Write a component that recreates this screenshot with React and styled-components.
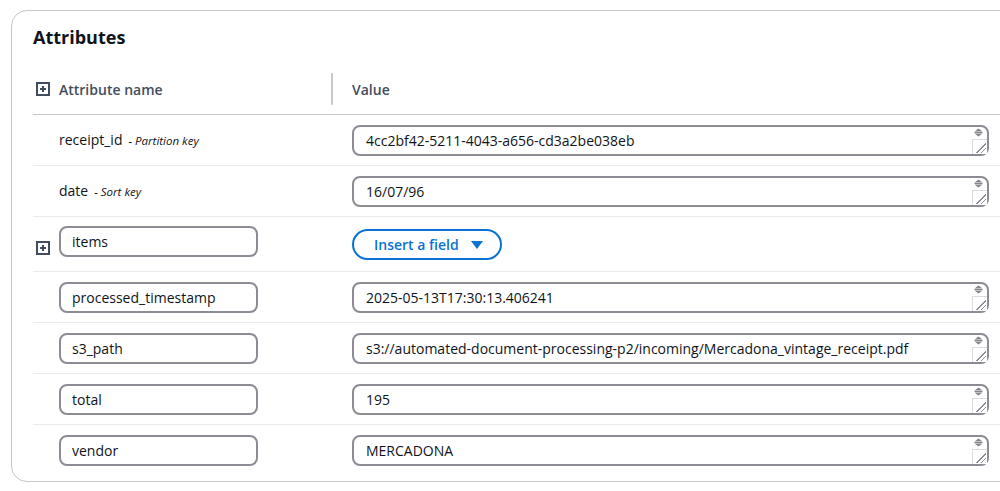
import React from "react";
import styled, { createGlobalStyle } from "styled-components";

const Global = createGlobalStyle`
  html, body { margin: 0; padding: 0; background: #ffffff; overflow: hidden; }
  body { font-family: "Open Sans", "Noto Sans", Arial, sans-serif; color: #0f141a; }
  * { box-sizing: border-box; }
`;

const Page = styled.div`
  padding: 10px 0 0 11px;
  width: 1000px;
  height: 491px;
  overflow: hidden;
`;

const Card = styled.section`
  width: 1040px;
  height: 472px;
  border: 1px solid #c6c6cd;
  border-radius: 16px;
  padding: 15px 0 0 21px;
  background: #fff;
`;

const Title = styled.h2`
  margin: 0 0 16px 0;
  font-size: 18px;
  line-height: 22px;
  font-weight: 700;
  color: #0f141a;
`;

const HeaderRow = styled.div`
  display: flex;
  align-items: center;
  height: 51px;
  border-bottom: 1px solid #c6c6cd;
`;

const IconCell = styled.div`
  width: 26px;
  flex: none;
  display: flex;
  padding-left: 3px;
  padding-top: ${(p) => p.$top || 0}px;
  align-self: ${(p) => (p.$top ? "flex-start" : "center")};
`;

const HeadName = styled.div`
  width: 272px;
  font-size: 14px;
  font-weight: 600;
  color: #414d5c;
`;

const HeadDivider = styled.div`
  width: 2px;
  height: 32px;
  background: #c6c6cd;
  border-radius: 1px;
`;

const HeadValue = styled.div`
  padding-left: 19px;
  font-size: 14px;
  font-weight: 600;
  color: #414d5c;
`;

const Row = styled.div`
  display: grid;
  grid-template-columns: 26px 293px 1fr;
  align-items: ${(p) => (p.$top ? "start" : "center")};
  min-height: ${(p) => (p.$tall ? 55 : 51)}px;
  padding-top: ${(p) => (p.$top ? 9 : 0)}px;
  border-bottom: ${(p) => (p.$last ? "none" : "1px solid #e9ebed")};
`;

const NameText = styled.div`
  font-size: 14px;
  line-height: 20px;
  color: #0f141a;
`;

const KeyHint = styled.span`
  font-size: 11.5px;
  font-style: italic;
  margin-left: 6px;
  color: #0f141a;
`;

const NameInput = styled.input`
  width: 199px;
  height: 31px;
  border: 2px solid #8c8c94;
  border-radius: 8px;
  padding: 0 11px;
  font-family: inherit;
  font-size: 14px;
  color: #0f141a;
  background: #fff;
  outline: none;
`;

const AreaWrap = styled.div`
  position: relative;
  width: 637px;
`;

const ValueArea = styled.textarea`
  display: block;
  width: 637px;
  height: 31px;
  border: 2px solid #8c8c94;
  border-radius: 8px;
  padding: 4px 12px;
  font-family: inherit;
  font-size: 14px;
  line-height: 19px;
  color: #0f141a;
  background: #fff;
  overflow-y: scroll;
  resize: vertical;
  outline: none;
  white-space: nowrap;

  &::-webkit-scrollbar {
    width: 15px;
    background: #fff;
  }
  &::-webkit-scrollbar-thumb,
  &::-webkit-scrollbar-track {
    background: transparent;
  }
  &::-webkit-scrollbar-button {
    display: none;
  }
  &::-webkit-resizer {
    background:
      linear-gradient(#dcdce0, #dcdce0) no-repeat left top / 1px 100%,
      linear-gradient(#dcdce0, #dcdce0) no-repeat left top / 100% 1px,
      linear-gradient(
          to bottom right,
          transparent 58%,
          #8c8c94 58%,
          #8c8c94 64%,
          transparent 64%,
          transparent 76%,
          #8c8c94 76%,
          #8c8c94 82%,
          transparent 82%
        )
        no-repeat right 1px bottom 1px / 12px 12px,
      #fff;
  }
  &::-webkit-scrollbar-corner {
    background: #fff;
  }
`;

const ScrollArrows = styled.svg`
  position: absolute;
  top: 2px;
  right: 2px;
  width: 15px;
  height: 11px;
  pointer-events: none;
`;

const InsertButton = styled.button`
  display: inline-flex;
  align-items: center;
  gap: 11px;
  height: 31px;
  margin-top: 3px;
  padding: 0 16px 0 20px;
  border: 2px solid #0972d3;
  border-radius: 20px;
  background: #fff;
  color: #0972d3;
  font-family: inherit;
  font-size: 14px;
  font-weight: 600;
  cursor: pointer;
`;

const PlusSquare = () => (
  <svg width="14" height="14" viewBox="0 0 14 14" aria-hidden="true">
    <rect x="1" y="1" width="12" height="12" fill="none" stroke="#414d5c" strokeWidth="2" />
    <path d="M7 4v6M4 7h6" stroke="#414d5c" strokeWidth="2" />
  </svg>
);

const Caret = () => (
  <svg width="14" height="10" viewBox="0 0 14 10" aria-hidden="true">
    <path d="M1 1h12L7 9z" fill="#0972d3" />
  </svg>
);

const Value = ({ value }) => (
  <AreaWrap>
    <ValueArea rows={1} defaultValue={value} />
    <ScrollArrows viewBox="0 0 15 11" aria-hidden="true">
      <path d="M2.5 4.5L6.5 1.5L10.5 4.5Z" fill="#85858d" />
      <path d="M2.5 5.5H10.5" stroke="#85858d" strokeWidth="1" />
      <path d="M2.5 6.5H10.5L6.5 9.5Z" fill="#85858d" />
    </ScrollArrows>
  </AreaWrap>
);

const rows = [
  { name: "processed_timestamp", value: "2025-05-13T17:30:13.406241" },
  { name: "s3_path", value: "s3://automated-document-processing-p2/incoming/Mercadona_vintage_receipt.pdf" },
  { name: "total", value: "195" },
  { name: "vendor", value: "MERCADONA" },
];

export default function App() {
  return (
    <>
      <Global />
      <Page>
        <Card>
          <Title>Attributes</Title>
          <HeaderRow>
            <IconCell>
              <PlusSquare />
            </IconCell>
            <HeadName>Attribute name</HeadName>
            <HeadDivider />
            <HeadValue>Value</HeadValue>
          </HeaderRow>

          <Row>
            <span />
            <NameText>
              receipt_id<KeyHint>- Partition key</KeyHint>
            </NameText>
            <Value value="4cc2bf42-5211-4043-a656-cd3a2be038eb" />
          </Row>

          <Row>
            <span />
            <NameText>
              date<KeyHint>- Sort key</KeyHint>
            </NameText>
            <Value value="16/07/96" />
          </Row>

          <Row $top $tall>
            <IconCell $top={15}>
              <PlusSquare />
            </IconCell>
            <NameInput defaultValue="items" />
            <div>
              <InsertButton type="button">
                Insert a field
                <Caret />
              </InsertButton>
            </div>
          </Row>

          {rows.map((r, i) => (
            <Row key={r.name} $last={i === rows.length - 1}>
              <span />
              <NameInput defaultValue={r.name} />
              <Value value={r.value} />
            </Row>
          ))}
        </Card>
      </Page>
    </>
  );
}
